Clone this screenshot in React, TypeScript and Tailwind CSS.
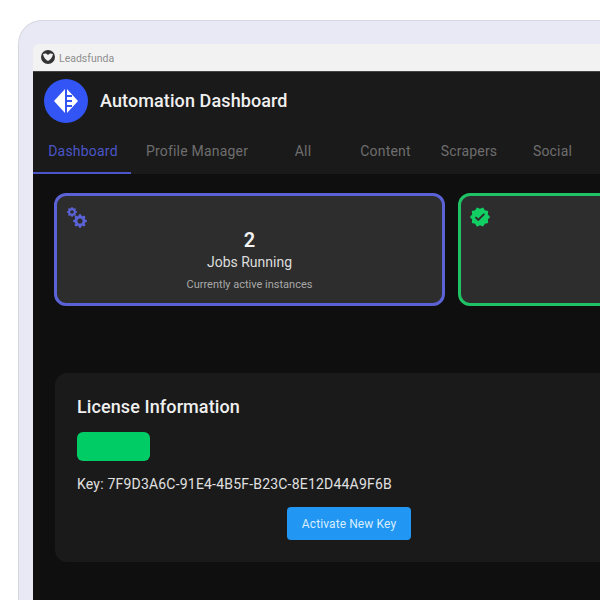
import { BsGearFill } from "react-icons/bs";
import { MdVerified } from "react-icons/md";

const tabs = [
  { label: "Dashboard", width: "w-[98px]", active: true },
  { label: "Profile Manager", width: "w-[132px]", active: false },
  { label: "All", width: "w-[80px]", active: false },
  { label: "Content", width: "w-[85px]", active: false },
  { label: "Scrapers", width: "w-[82px]", active: false },
  { label: "Social", width: "w-[85px]", active: false },
];

const Logo = () => (
  <div className="flex h-11 w-11 shrink-0 items-center justify-center rounded-full bg-[#3355f5]">
    <svg width="24" height="26" viewBox="0 0 24 26">
      <path d="M11 1 L11 25 L0 13 Z" fill="#fff" />
      <path d="M13 1 L24 13 L13 25 L13 19 L18 19 L18 17 L13 17 L13 14 L18 14 L18 12 L13 12 L13 9 L18 9 L18 7 L13 7 Z" fill="#fff" />
    </svg>
  </div>
);

const Favicon = () => (
  <div className="mb-[1px] flex h-[14px] w-[14px] items-center justify-center rounded-full bg-[#333]">
    <svg width="10" height="8" viewBox="0 0 10 8">
      <path d="M0 1 C2 0 4 0.5 5 2 C6 0.5 8 0 10 1 C9.5 4.5 7 7 5 8 C3 7 0.5 4.5 0 1 Z" fill="#f2f2f2" />
    </svg>
  </div>
);

export default function App() {
  return (
    <div className="h-[600px] w-[600px] overflow-hidden bg-white pl-[18px] pt-5 font-['Roboto',sans-serif]">
      {/* outer device frame */}
      <div className="h-[600px] w-[700px] rounded-tl-[24px] border-l border-t border-[#d6d6e2] bg-[#e8e9f5] pl-[14px] pt-[23px]">
        {/* window title bar */}
        <div className="flex h-[27px] items-center gap-[4px] rounded-tl-md bg-[#f2f2f2] pl-2">
          <Favicon />
          <span className="mt-[2px] text-[10.5px] text-[#8f8f8f]">Leadsfunda</span>
        </div>

        <div className="h-[600px] border-t border-[#444] bg-[#0f0f0f]">
          {/* header */}
          <header className="h-[102px] bg-[#1a1a1a]">
            <div className="flex h-[58px] items-center gap-3 pl-[11px]">
              <Logo />
              <h1 className="text-lg font-medium tracking-[0.1px] text-[#f0f0f0]">Automation Dashboard</h1>
            </div>
            <nav className="flex h-[44px]">
              {tabs.map((tab) => (
                <div
                  key={tab.label}
                  className={`flex shrink-0 items-center justify-center text-sm tracking-[0.2px] ${tab.width} ${
                    tab.active ? "border-b-2 border-[#4a55c8] pl-[2px] text-[#4a55c8]" : "pb-[2px] text-[#6e6e6e]"
                  }`}
                >
                  {tab.label}
                </div>
              ))}
            </nav>
          </header>

          <main className="pl-[21px] pt-[19px]">
            {/* stat cards */}
            <div className="flex gap-[13px]">
              <div className="relative flex h-[113px] w-[391px] shrink-0 flex-col items-center rounded-xl border-[3px] border-[#5a62d6] bg-[#2d2d2d] pt-[30px]">
                <div className="absolute left-[10px] top-[11px] h-[21px] w-5 text-[#5a62d6]">
                  <BsGearFill className="absolute left-0 top-0" size={10} />
                  <BsGearFill className="absolute bottom-0 right-0" size={14} />
                </div>
                <span className="text-xl font-semibold leading-7 text-[#f2f2f2]">2</span>
                <span className="-mt-[2px] text-sm leading-5 text-[#dddddd]">Jobs Running</span>
                <span className="mt-[5px] text-[11px] leading-4 text-[#a8a8a8]">Currently active instances</span>
              </div>
              <div className="relative h-[113px] w-[391px] shrink-0 rounded-xl border-[3px] border-[#1fc264] bg-[#2d2d2d]">
                <MdVerified className="absolute left-2 top-[10px] text-[#12cf63]" size={22} />
              </div>
            </div>

            {/* license panel */}
            <section className="ml-[1px] mt-[67px] h-[189px] w-[588px] rounded-xl bg-[#1a1a1a] pl-[22px] pt-[22px]">
              <h2 className="text-lg font-medium leading-6 tracking-[0.1px] text-[#efefef]">License Information</h2>
              <div className="mt-[13px] h-[29px] w-[73px] rounded-md bg-[#00cc66]" />
              <p className="mt-[13px] text-sm leading-5 tracking-[0.2px] text-[#e0e0e0]">
                Key: 7F9D3A6C-91E4-4B5F-B23C-8E12D44A9F6B
              </p>
              <div className="mt-[13px] pl-[210px]">
                <button className="h-[33px] w-[124px] rounded bg-[#2196f3] text-xs tracking-[0.1px] text-[#d8eefe]">
                  Activate New Key
                </button>
              </div>
            </section>
          </main>
        </div>
      </div>
    </div>
  );
}
